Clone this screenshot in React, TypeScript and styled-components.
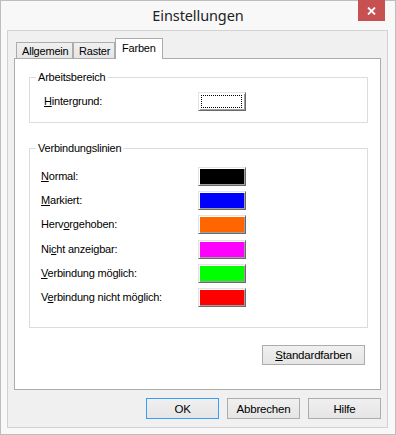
import React from "react";
import styled, { createGlobalStyle, css } from "styled-components";

const GlobalStyle = createGlobalStyle`
  html, body { margin: 0; padding: 0; background: #ffffff; }
  body { font-family: "Liberation Sans", Arial, sans-serif; }
  * { box-sizing: border-box; }
`;

const uiFont = css`
  font-family: "Liberation Sans", Arial, sans-serif;
  font-size: 11px;
  letter-spacing: -0.2px;
  color: #000;
`;

const Window = styled.div`
  width: 396px;
  height: 435px;
  border: 1px solid #bdbdbd;
  background: #f8f8f8;
  display: flex;
  flex-direction: column;
`;

const TitleBar = styled.div`
  height: 29px;
  flex: none;
  display: grid;
  grid-template-columns: 1fr auto 1fr;
  align-items: start;
`;

const Title = styled.div`
  grid-column: 2;
  font-family: "Segoe UI", "Noto Sans", "Open Sans", sans-serif;
  font-size: 14.5px;
  line-height: 29px;
  color: #222;
  letter-spacing: -0.1px;
`;

const CloseButton = styled.div`
  grid-column: 3;
  justify-self: end;
  margin-top: -1px;
  margin-right: 10px;
  width: 27px;
  height: 21px;
  background: #c75050;
  display: flex;
  align-items: center;
  justify-content: center;
`;

const Client = styled.div`
  flex: 1;
  margin: 0 7px 6px 6px;
  border: 1px solid #d2d2d2;
  background: #f0f0f0;
  padding: 7px 6px 8px 6px;
  display: flex;
  flex-direction: column;
`;

const TabStrip = styled.div`
  height: 20px;
  flex: none;
  display: flex;
  align-items: flex-end;
  padding-left: 2px;
`;

const Tab = styled.div<{ $active?: boolean; $width: number }>`
  ${uiFont};
  width: ${(p) => p.$width}px;
  border: 1px solid #acacac;
  border-bottom: none;
  display: flex;
  align-items: center;
  ${(p) =>
    p.$active
      ? css`
          height: 21px;
          margin-bottom: -1px;
          background: #ffffff;
          position: relative;
          z-index: 1;
          padding: 0 0 2px 6px;
        `
      : css`
          height: 16px;
          background: linear-gradient(#f0f0f0, #e5e5e5);
          padding: 0 0 0 5px;
        `}
`;

const TabPage = styled.div`
  flex: 1;
  border: 1px solid #acacac;
  background: #ffffff;
  padding: 12px 12px 24px 14px;
  display: flex;
  flex-direction: column;
`;

const GroupBox = styled.fieldset<{ $top: number; $bottom: number; $gap?: number }>`
  margin: 0;
  border: 1px solid #dcdcdc;
  padding: ${(p) => p.$top}px 0 ${(p) => p.$bottom}px 0;
  min-width: 0;
  display: flex;
  flex-direction: column;
  gap: ${(p) => p.$gap ?? 0}px;
  & + & {
    margin-top: 19px;
  }
`;

const Legend = styled.legend`
  ${uiFont};
  line-height: 13px;
  margin-left: 6px;
  padding: 0 2px;
`;

const Row = styled.div`
  display: grid;
  grid-template-columns: 168px 48px;
  align-items: center;
  height: 19px;
`;

const Label = styled.span<{ $indent: number }>`
  ${uiFont};
  padding-left: ${(p) => p.$indent}px;
  line-height: 13px;
`;

const Mn = styled.span`
  text-decoration: underline;
  text-underline-offset: 1px;
`;

const ColorButton = styled.div<{ $color: string }>`
  width: 48px;
  height: 19px;
  border: 1px solid;
  border-color: #e3e3e3 #696969 #696969 #e3e3e3;
  box-shadow: inset 1px 1px 0 #ffffff, inset -1px -1px 0 #a0a0a0;
  background: ${(p) => p.$color};
  padding: 2px 3px 2px 2px;
`;

const FocusRect = styled.div`
  width: 100%;
  height: 100%;
  border: 1px dotted #000;
`;

const Footer = styled.div`
  margin-top: 17px;
  display: flex;
  justify-content: flex-end;
  padding-right: 3px;
`;

const PushButton = styled.div<{ $width: number; $height: number; $default?: boolean }>`
  ${uiFont};
  width: ${(p) => p.$width}px;
  height: ${(p) => p.$height}px;
  border: 1px solid ${(p) => (p.$default ? "#3c9cfa" : "#acacac")};
  background: linear-gradient(#f0f0f0, #e5e5e5);
  display: flex;
  align-items: center;
  justify-content: center;
  font-size: 11.5px;
`;

const DialogButtons = styled.div`
  margin-top: 8px;
  display: flex;
  justify-content: flex-end;
  gap: 8px;
`;

const rows: { label: React.ReactNode; color: string }[] = [
  { label: <><Mn>N</Mn>ormal:</>, color: "#000000" },
  { label: <><Mn>M</Mn>arkiert:</>, color: "#0000ff" },
  { label: <>Herv<Mn>o</Mn>rgehoben:</>, color: "#ff6600" },
  { label: <>Ni<Mn>c</Mn>ht anzeigbar:</>, color: "#ff00ff" },
  { label: <><Mn>V</Mn>erbindung möglich:</>, color: "#00ff00" },
  { label: <>V<Mn>e</Mn>rbindung nicht möglich:</>, color: "#ff0000" },
];

export default function App() {
  return (
    <>
      <GlobalStyle />
      <Window>
        <TitleBar>
          <Title>Einstellungen</Title>
          <CloseButton>
            <svg width="9" height="8" viewBox="0 0 9 8">
              <path d="M1 0.5 L8 7.5 M8 0.5 L1 7.5" stroke="#ffffff" strokeWidth="1.8" />
            </svg>
          </CloseButton>
        </TitleBar>
        <Client>
          <TabStrip>
            <Tab $width={57}>Allgemein</Tab>
            <Tab $width={42}>Raster</Tab>
            <Tab $width={48} $active>Farben</Tab>
          </TabStrip>
          <TabPage>
            <GroupBox $top={8} $bottom={11}>
              <Legend>Arbeitsbereich</Legend>
              <Row>
                <Label $indent={14}>
                  <Mn>H</Mn>intergrund:
                </Label>
                <ColorButton $color="#ffffff">
                  <FocusRect />
                </ColorButton>
              </Row>
            </GroupBox>
            <GroupBox $top={12} $bottom={20} $gap={5.2}>
              <Legend>Verbindungslinien</Legend>
              {rows.map((r, i) => (
                <Row key={i}>
                  <Label $indent={11}>{r.label}</Label>
                  <ColorButton $color={r.color} />
                </Row>
              ))}
            </GroupBox>
            <Footer>
              <PushButton $width={103} $height={20}>
                <span>
                  <Mn>S</Mn>tandardfarben
                </span>
              </PushButton>
            </Footer>
          </TabPage>
          <DialogButtons>
            <PushButton $width={73} $height={21} $default>OK</PushButton>
            <PushButton $width={73} $height={21}>Abbrechen</PushButton>
            <PushButton $width={73} $height={21}>Hilfe</PushButton>
          </DialogButtons>
        </Client>
      </Window>
    </>
  );
}
